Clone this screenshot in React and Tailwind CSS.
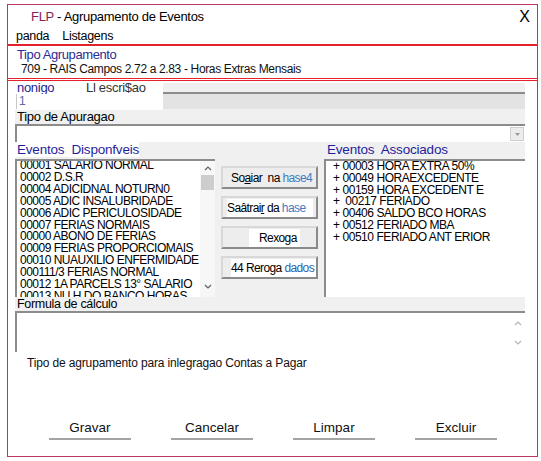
const disponiveis = [
  "00001 SALARIO NORMAL",
  "00002 D.S.R",
  "00004 ADICIDNAL NOTURN0",
  "00005 ADIC INSALUBRIDADE",
  "00006 ADIC PERICULOSIDADE",
  "00007 FERIAS NORMAIS",
  "00000 ABONO DE FERIAS",
  "00009 FERIAS PROPORCIOMAIS",
  "00010 NUAUXILIO ENFERMIDADE",
  "000111/3 FERIAS NORMAL",
  "00012 1A PARCELS 13° SALARIO",
  "00013 NU.H.DO BANCO HORAS",
];

const associados = [
  "+ 00003 HORA EXTRA 50%",
  "+ 00049 HORAEXCEDENTE",
  "+ 00159 HORA EXCEDENT E",
  "+  00217 FERIADO",
  "+ 00406 SALDO BCO HORAS",
  "+ 00512 FERIADO MBA",
  "+ 00510 FERIADO ANT ERIOR",
];

function Chevron({ up, color = "#606060" }) {
  return (
    <svg width="8" height="5" viewBox="0 0 8 5">
      <polyline
        points={up ? "1,4 4,1 7,4" : "1,1 4,4 7,1"}
        fill="none"
        stroke={color}
        strokeWidth="1.2"
      />
    </svg>
  );
}

function SideButton({ children, className = "" }) {
  return (
    <div
      className={
        "h-[23px] flex items-center whitespace-nowrap overflow-hidden border-2 border-t-[#d8d8d8] border-l-[#d8d8d8] border-r-[#8a8a8a] border-b-[#8a8a8a] bg-[#ededed] text-[12px] tracking-[-0.6px] " +
        className
      }
    >
      {children}
    </div>
  );
}

function BottomButton({ label }) {
  return (
    <div className="w-[82px] flex flex-col items-center">
      <div className="h-[16px] leading-[16px] text-[13.5px] text-[#111]">{label}</div>
      <div className="mt-[2px] h-[2px] w-full bg-[#a3a3a3]" />
    </div>
  );
}

export default function App() {
  return (
    <div className="w-[541px] h-[461px] bg-white pt-[4px] pl-[7px] font-['Liberation_Sans',Arial,sans-serif] text-black overflow-hidden">
      <div className="w-[531px] h-[453px] border border-[#b8365f] flex flex-col">
        {/* title */}
        <div className="h-[24px] flex items-center justify-between pl-[23px] pr-[7px]">
          <div className="text-[13px] tracking-[-0.3px]">
            <span className="text-[#861d55]">FLP</span> - Agrupamento de Eventos
          </div>
          <div className="text-[16px] leading-none">X</div>
        </div>
        {/* menu */}
        <div className="h-[15px] flex items-center pl-[8px] gap-[13px] text-[12.5px] tracking-[-0.3px]">
          <span>panda</span>
          <span>Listagens</span>
        </div>
        <div className="h-[2px] bg-[#e3222b]" />
        {/* tipo agrupamento */}
        <div className="h-[32px] pl-[9px] pt-[1px]">
          <div className="text-[13px] leading-[15px] tracking-[-0.4px] text-[#2c2c96]">Tipo Agrupamento</div>
          <div className="pl-[4px] text-[12px] leading-[15px] tracking-[-0.35px] text-[#111]">
            709 - RAIS Campos 2.72 a 2.83 - Horas Extras Mensais
          </div>
        </div>
        <div className="h-[3px] border-t border-b border-[#e3222b]" />
        {/* content */}
        <div className="mt-[2px] ml-[7px] w-[510px] bg-[#f0f0f0] flex flex-col">
          <div className="h-[27px] flex">
            <div className="w-[148px] bg-white flex flex-col">
              <div className="h-[11px] overflow-hidden flex text-[13px] leading-[10px] tracking-[-0.3px]">
                <span className="pl-[2px] w-[71px] text-[#25258f]">nonigo</span>
                <span className="text-[#333]">Ll escri$ao</span>
              </div>
              <div className="h-[15px] ml-[1px] border-l border-[#c8c8c8] pl-[2px] text-[12px] leading-[15px] text-[#5b6a9a]">
                1
              </div>
            </div>
            <div className="flex-1 flex flex-col">
              <div className="h-[9px]" />
              <div className="h-[17px] border-t-2 border-[#8c8c8c] bg-[#e3e3e3]" />
            </div>
          </div>
          <div className="h-[14px] pl-[2px] text-[13px] leading-[14px] tracking-[-0.3px]">Tipo de Apuragao</div>
          <div className="h-[18px] border-t-2 border-l-2 border-[#8c8c8c] bg-white flex justify-end items-start pt-[1px] pr-[1px]">
            <div className="w-[14px] h-[14px] bg-[#ececec] border border-[#cfcfcf] flex items-center justify-center">
              <svg width="5" height="3" viewBox="0 0 5 3">
                <polygon points="0,0 5,0 2.5,3" fill="#9a9a9a" />
              </svg>
            </div>
          </div>
          <div className="h-[17px] flex items-center text-[13.5px] tracking-[-0.2px] text-[#1f1f9c]">
            <span className="w-[310px]">
              <span className="bg-white pl-[2px]">Eventos&nbsp; Disponfveis</span>
            </span>
            <span className="pl-[2px]">Eventos&nbsp; Associados</span>
          </div>
          {/* lists */}
          <div className="h-[138px] flex">
            <div className="w-[200px] border-t-2 border-l-2 border-[#8c8c8c] bg-white flex overflow-hidden">
              <div className="flex-1 pl-[3px] overflow-hidden">
                <div className="-mt-[1px] text-[12px] leading-[11.9px] tracking-[-0.5px] whitespace-nowrap">
                  {disponiveis.map((d) => (
                    <div key={d}>{d}</div>
                  ))}
                </div>
              </div>
              <div className="w-[15px] bg-[#f7f7f7] flex flex-col items-center pt-[5px] pb-[8px]">
                <Chevron up />
                <div className="mt-[4px] w-[13px] h-[15px] bg-[#cdcdcd]" />
                <div className="flex-1" />
                <Chevron />
              </div>
            </div>
            <div className="w-[97px] ml-[6px] pt-[7px] flex flex-col gap-[7px]">
              <SideButton className="pl-[8px]">
                <span>
                  So<span className="underline">a</span>iar&nbsp; na <span className="text-[#3f7cc4]">hase4</span>
                </span>
              </SideButton>
              <SideButton className="pl-[4px]">
                <span className="bg-white pr-[8px]">
                  Saâtrai<span className="underline">r</span> da <span className="text-[#3f7cc4]">hase</span>
                </span>
              </SideButton>
              <SideButton className="pl-[26px]">
                <span className="bg-white pl-[10px] pr-[3px]">Rexoga</span>
              </SideButton>
              <SideButton className="pl-[8px]">
                <span className="bg-white pr-[2px]">
                  44 Reroga <span className="text-[#2f5fa8]">dados</span>
                </span>
              </SideButton>
            </div>
            <div className="w-[201px] ml-[6px] border-t-2 border-l-2 border-[#8c8c8c] bg-white pl-[7px] overflow-hidden">
              <div className="text-[12px] leading-[11.8px] tracking-[-0.45px] whitespace-pre">
                {associados.map((a) => (
                  <div key={a}>{a}</div>
                ))}
              </div>
            </div>
          </div>
          <div className="h-[14px] pl-[2px] text-[12.5px] leading-[14px] tracking-[-0.3px]">Formula de cálculo</div>
          <div className="h-[41px] border-t-2 border-l-2 border-[#8c8c8c] bg-white flex justify-end">
            <div className="w-[15px] flex flex-col items-center justify-between pt-[8px] pb-[7px]">
              <Chevron up color="#b4b4b4" />
              <Chevron color="#b4b4b4" />
            </div>
          </div>
        </div>
        {/* footer */}
        <div className="mt-[4px] h-[14px] pl-[19px] text-[12px] leading-[14px] tracking-[-0.15px] text-[#111]">
          Tipo de agrupamento para inlegragao Contas a Pagar
        </div>
        <div className="mt-[50px] pl-[41px] flex gap-[40px]">
          <BottomButton label="Gravar" />
          <BottomButton label="Cancelar" />
          <BottomButton label="Limpar" />
          <BottomButton label="Excluir" />
        </div>
      </div>
    </div>
  );
}
